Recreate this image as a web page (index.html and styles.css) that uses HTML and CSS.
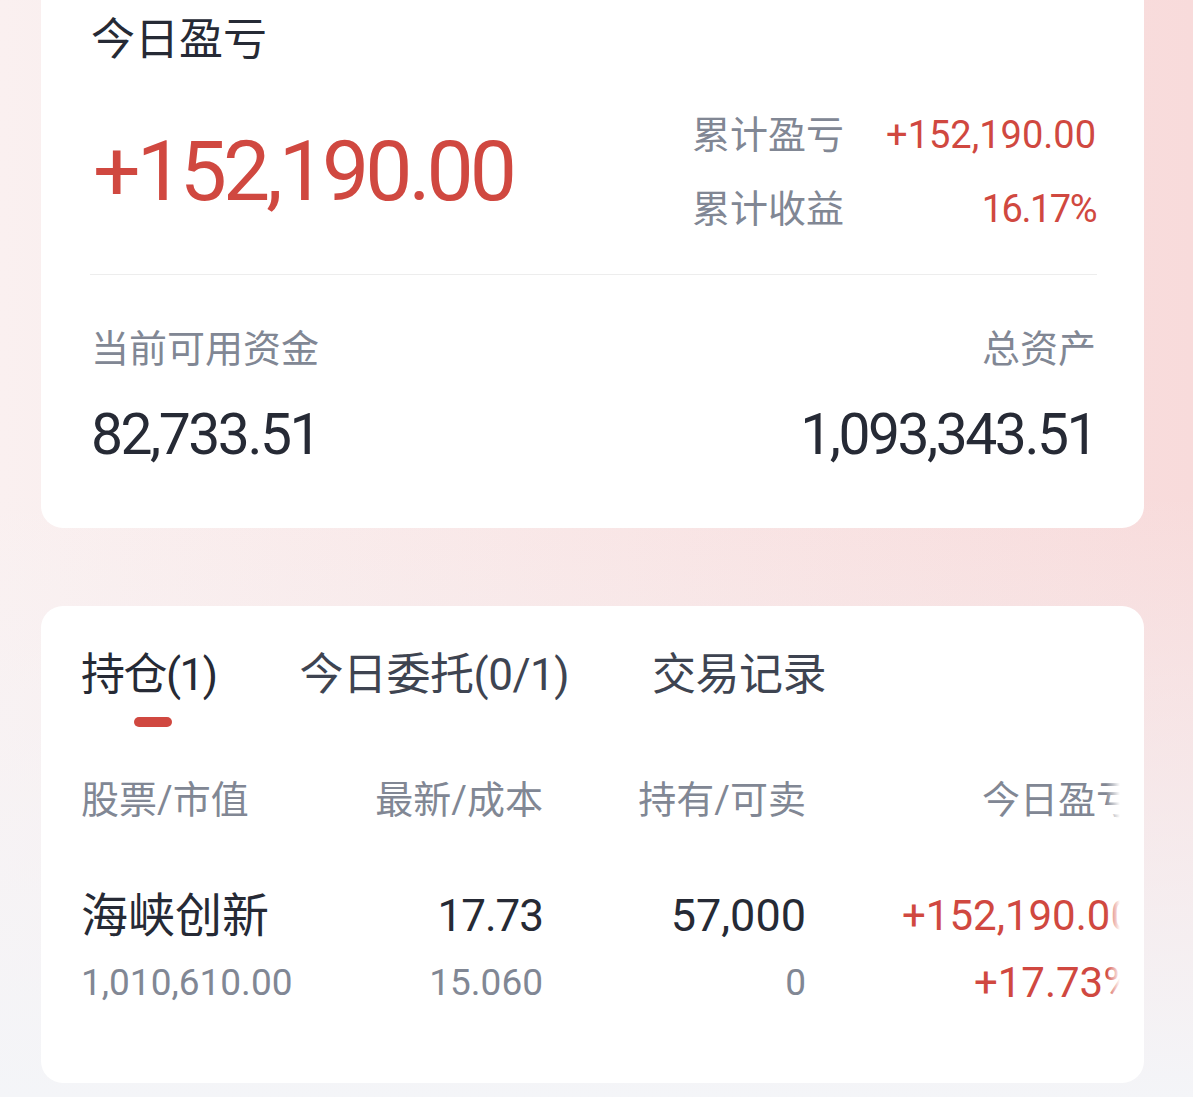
FILE: index.html
```html
<!DOCTYPE html>
<html lang="zh-CN">
<head>
    <meta charset="UTF-8">
    <meta name="viewport" content="width=device-width, initial-scale=1.0">
    <title>持仓</title>
    <link rel="stylesheet" href="styles.css">
</head>
<body>
    <div class="page">
        <section class="card summary">
            <h2 class="title">今日盈亏</h2>
            <div class="pnl-row">
                <div class="pnl-today up">+152,190.00</div>
                <div class="pnl-stats">
                    <span class="stat-label">累计盈亏</span>
                    <span class="stat-value up">+152,190.00</span>
                    <span class="stat-label">累计收益</span>
                    <span class="stat-value up tight">16.17%</span>
                </div>
            </div>
            <div class="divider"></div>
            <div class="funds">
                <div class="fund">
                    <div class="fund-label">当前可用资金</div>
                    <div class="fund-value">82,733.51</div>
                </div>
                <div class="fund right">
                    <div class="fund-label">总资产</div>
                    <div class="fund-value">1,093,343.51</div>
                </div>
            </div>
        </section>

        <section class="card positions">
            <div class="tabs">
                <div class="tab active">
                    <span>持仓(1)</span>
                    <i class="tab-line"></i>
                </div>
                <div class="tab"><span>今日委托(0/1)</span></div>
                <div class="tab"><span>交易记录</span></div>
            </div>

            <div class="table-wrap">
                <div class="table">
                    <div class="th">股票/市值</div>
                    <div class="th num">最新/成本</div>
                    <div class="th num">持有/可卖</div>
                    <div class="th num">今日盈亏</div>

                    <div class="td">
                        <span class="main name">海峡创新</span>
                        <span class="sub">1,010,610.00</span>
                    </div>
                    <div class="td num">
                        <span class="main">17.73</span>
                        <span class="sub">15.060</span>
                    </div>
                    <div class="td num">
                        <span class="main wide">57,000</span>
                        <span class="sub">0</span>
                    </div>
                    <div class="td num pnl">
                        <span class="main up">+152,190.00</span>
                        <span class="sub up">+17.73%</span>
                    </div>
                </div>
            </div>
        </section>
    </div>
</body>
</html>
```

FILE: styles.css
```css
:root {
    --text-dark: #262a35;
    --text-tab: #3e4451;
    --text-gray: #818794;
    --red: #d04840;
    --line: #ededed;
}

body {
    margin: 0;
    min-height: 1097px;
    font-family: "Roboto", "Noto Sans CJK SC", sans-serif;
    color: var(--text-dark);
    background:
        linear-gradient(180deg, rgba(244, 245, 248, 0) 45%, #f4f5f8 100%),
        linear-gradient(90deg, #faf0f0 0%, #f8dbdb 100%);
}
.page {
    padding: 0 49px 14px 41px;
}
.card {
    background: #fff;
    border-radius: 22px;
}
.up {
    color: var(--red);
}

/* 汇总卡片 */
.summary {
    border-radius: 0 0 22px 22px;
    padding: 14px 48px 58px 50px;
}
.title {
    margin: 0;
    font-size: 44px;
    line-height: 52px;
    font-weight: 400;
}
.pnl-row {
    margin-top: 32px;
    height: 148px;
    display: flex;
    justify-content: space-between;
    align-items: center;
}
.pnl-today {
    font-size: 84px;
    line-height: 100px;
    letter-spacing: -4px;
    margin-left: 2px;
}
.pnl-stats {
    display: grid;
    grid-template-columns: auto auto;
    column-gap: 42px;
    font-size: 38px;
    line-height: 74px;
}
.stat-label {
    color: var(--text-gray);
}
.stat-value {
    text-align: right;
}
.stat-value.tight {
    letter-spacing: -1.5px;
}
.divider {
    margin: 28px -1px 0 -1px;
    height: 1px;
    background: var(--line);
}
.funds {
    margin-top: 51px;
    display: flex;
    justify-content: space-between;
}
.fund.right {
    text-align: right;
}
.fund-label {
    font-size: 38px;
    line-height: 46px;
    color: var(--text-gray);
}
.fund-value {
    margin-top: 28px;
    font-size: 57px;
    line-height: 70px;
    letter-spacing: -2.5px;
}

/* 持仓卡片 */
.positions {
    margin-top: 78px;
    padding: 39px 24px 77px 40px;
}
.tabs {
    display: flex;
    align-items: flex-start;
    gap: 83px;
}
.tab {
    display: flex;
    flex-direction: column;
    align-items: center;
    font-size: 44px;
    line-height: 60px;
    color: var(--text-tab);
    letter-spacing: -0.5px;
}
.tab.active {
    color: var(--text-dark);
    letter-spacing: -1.5px;
}
.tab-line {
    margin: 12px 0 0 8px;
    width: 38px;
    height: 10px;
    border-radius: 5px;
    background: var(--red);
}
.table-wrap {
    margin-top: 50px;
    position: relative;
    overflow: hidden;
}
.table-wrap::after {
    content: "";
    position: absolute;
    top: 0;
    right: 0;
    bottom: 0;
    width: 14px;
    background: linear-gradient(90deg, rgba(255, 255, 255, 0), #fff);
}
.table {
    display: grid;
    grid-template-columns: 270px 192px 263px 328px;
    width: 1053px;
}
.th {
    font-size: 38px;
    line-height: 46px;
    color: var(--text-gray);
}
.th:last-child {
    font-size: 39px;
}
.num {
    text-align: right;
}
.td {
    margin-top: 65px;
    display: flex;
    flex-direction: column;
}
.td .main {
    font-size: 44px;
    line-height: 56px;
    letter-spacing: -1px;
}
.td .main.name {
    font-size: 47px;
    letter-spacing: 0;
}
.td .main.wide {
    font-size: 45px;
    letter-spacing: 0;
}
.td .sub {
    margin-top: 16px;
    font-size: 37px;
    line-height: 46px;
    color: var(--text-gray);
}
.td.pnl .main {
    font-size: 42px;
    letter-spacing: 0;
}
.td.pnl .sub {
    font-size: 42px;
    color: var(--red);
}
```
